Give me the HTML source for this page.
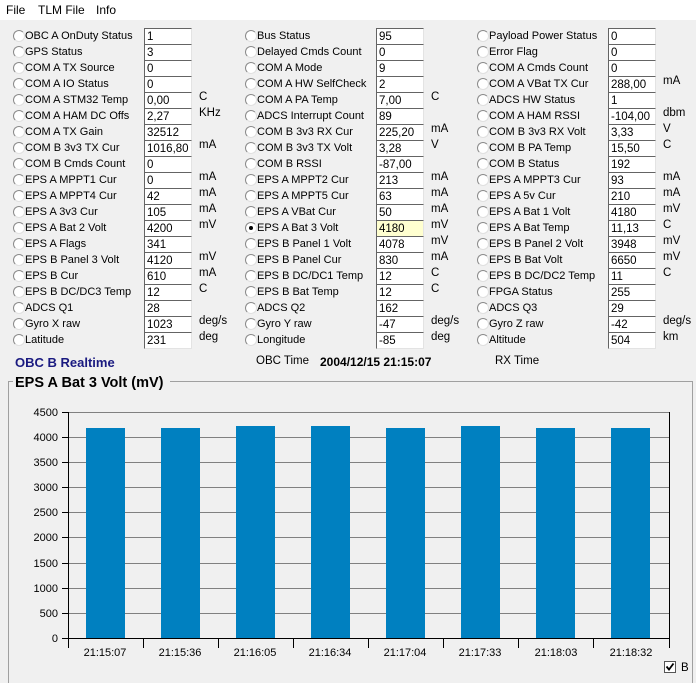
<!DOCTYPE html><html><head><style>
body{margin:0;width:696px;height:683px;background:#f0f0f0;font-family:"Liberation Sans",sans-serif;font-size:11px;color:#000;position:relative;overflow:hidden}
.m{position:absolute;top:0;left:0;width:696px;height:20px;background:#fff}
.m span{position:absolute;top:3px;font-size:12px}
.row{position:absolute;height:16px;width:232px}
.rd{position:absolute;left:7px;top:1px;width:10px;height:10px;border-radius:50%;background:#fff;border:1px solid #9a9a9a;border-color:#8a8a8a #e0e0e0 #e0e0e0 #8a8a8a}
.rd.on::after{content:"";position:absolute;left:3px;top:3px;width:4px;height:4px;border-radius:50%;background:#000}
.l{position:absolute;left:19px;top:1px;white-space:nowrap;font-size:11px}
.b{position:absolute;left:138px;top:-1px;width:44px;height:14px;background:#fff;border-left:1px solid #646464;border-top:1px solid #646464;border-right:1px solid #e3e3e3;border-bottom:1px solid #e3e3e3;padding:1px 0 0 2px;box-sizing:content-box;line-height:15px;font-size:11.5px}
.b.y{background:#ffffd0}
.u{position:absolute;left:193px;top:-2px;font-size:11.5px}
.t{position:absolute;white-space:nowrap}
</style></head><body>
<div class="m"><span style="left:6px">File</span><span style="left:38px">TLM File</span><span style="left:96px">Info</span></div>

<div style="position:absolute;left:6px;top:29px">
<div class="row" style="top:0"><i class="rd"></i><span class="l">OBC A OnDuty Status</span><span class="b">1</span></div>
<div class="row" style="top:16px"><i class="rd"></i><span class="l">GPS Status</span><span class="b">3</span></div>
<div class="row" style="top:32px"><i class="rd"></i><span class="l">COM A TX Source</span><span class="b">0</span></div>
<div class="row" style="top:48px"><i class="rd"></i><span class="l">COM A IO Status</span><span class="b">0</span></div>
<div class="row" style="top:64px"><i class="rd"></i><span class="l">COM A STM32 Temp</span><span class="b">0,00</span><span class="u">C</span></div>
<div class="row" style="top:80px"><i class="rd"></i><span class="l">COM A HAM DC Offs</span><span class="b">2,27</span><span class="u">KHz</span></div>
<div class="row" style="top:96px"><i class="rd"></i><span class="l">COM A TX Gain</span><span class="b">32512</span></div>
<div class="row" style="top:112px"><i class="rd"></i><span class="l">COM B 3v3 TX Cur</span><span class="b">1016,80</span><span class="u">mA</span></div>
<div class="row" style="top:128px"><i class="rd"></i><span class="l">COM B Cmds Count</span><span class="b">0</span></div>
<div class="row" style="top:144px"><i class="rd"></i><span class="l">EPS A MPPT1 Cur</span><span class="b">0</span><span class="u">mA</span></div>
<div class="row" style="top:160px"><i class="rd"></i><span class="l">EPS A MPPT4 Cur</span><span class="b">42</span><span class="u">mA</span></div>
<div class="row" style="top:176px"><i class="rd"></i><span class="l">EPS A 3v3 Cur</span><span class="b">105</span><span class="u">mA</span></div>
<div class="row" style="top:192px"><i class="rd"></i><span class="l">EPS A Bat 2 Volt</span><span class="b">4200</span><span class="u">mV</span></div>
<div class="row" style="top:208px"><i class="rd"></i><span class="l">EPS A Flags</span><span class="b">341</span></div>
<div class="row" style="top:224px"><i class="rd"></i><span class="l">EPS B Panel 3 Volt</span><span class="b">4120</span><span class="u">mV</span></div>
<div class="row" style="top:240px"><i class="rd"></i><span class="l">EPS B Cur</span><span class="b">610</span><span class="u">mA</span></div>
<div class="row" style="top:256px"><i class="rd"></i><span class="l">EPS B DC/DC3 Temp</span><span class="b">12</span><span class="u">C</span></div>
<div class="row" style="top:272px"><i class="rd"></i><span class="l">ADCS Q1</span><span class="b">28</span></div>
<div class="row" style="top:288px"><i class="rd"></i><span class="l">Gyro X raw</span><span class="b">1023</span><span class="u">deg/s</span></div>
<div class="row" style="top:304px"><i class="rd"></i><span class="l">Latitude</span><span class="b">231</span><span class="u">deg</span></div>
</div>

<div style="position:absolute;left:238px;top:29px">
<div class="row" style="top:0"><i class="rd"></i><span class="l">Bus Status</span><span class="b">95</span></div>
<div class="row" style="top:16px"><i class="rd"></i><span class="l">Delayed Cmds Count</span><span class="b">0</span></div>
<div class="row" style="top:32px"><i class="rd"></i><span class="l">COM A Mode</span><span class="b">9</span></div>
<div class="row" style="top:48px"><i class="rd"></i><span class="l">COM A HW SelfCheck</span><span class="b">2</span></div>
<div class="row" style="top:64px"><i class="rd"></i><span class="l">COM A PA Temp</span><span class="b">7,00</span><span class="u">C</span></div>
<div class="row" style="top:80px"><i class="rd"></i><span class="l">ADCS Interrupt Count</span><span class="b">89</span></div>
<div class="row" style="top:96px"><i class="rd"></i><span class="l">COM B 3v3 RX Cur</span><span class="b">225,20</span><span class="u">mA</span></div>
<div class="row" style="top:112px"><i class="rd"></i><span class="l">COM B 3v3 TX Volt</span><span class="b">3,28</span><span class="u">V</span></div>
<div class="row" style="top:128px"><i class="rd"></i><span class="l">COM B RSSI</span><span class="b">-87,00</span></div>
<div class="row" style="top:144px"><i class="rd"></i><span class="l">EPS A MPPT2 Cur</span><span class="b">213</span><span class="u">mA</span></div>
<div class="row" style="top:160px"><i class="rd"></i><span class="l">EPS A MPPT5 Cur</span><span class="b">63</span><span class="u">mA</span></div>
<div class="row" style="top:176px"><i class="rd"></i><span class="l">EPS A VBat Cur</span><span class="b">50</span><span class="u">mA</span></div>
<div class="row" style="top:192px"><i class="rd on"></i><span class="l">EPS A Bat 3 Volt</span><span class="b y">4180</span><span class="u">mV</span></div>
<div class="row" style="top:208px"><i class="rd"></i><span class="l">EPS B Panel 1 Volt</span><span class="b">4078</span><span class="u">mV</span></div>
<div class="row" style="top:224px"><i class="rd"></i><span class="l">EPS B Panel Cur</span><span class="b">830</span><span class="u">mA</span></div>
<div class="row" style="top:240px"><i class="rd"></i><span class="l">EPS B DC/DC1 Temp</span><span class="b">12</span><span class="u">C</span></div>
<div class="row" style="top:256px"><i class="rd"></i><span class="l">EPS B Bat Temp</span><span class="b">12</span><span class="u">C</span></div>
<div class="row" style="top:272px"><i class="rd"></i><span class="l">ADCS Q2</span><span class="b">162</span></div>
<div class="row" style="top:288px"><i class="rd"></i><span class="l">Gyro Y raw</span><span class="b">-47</span><span class="u">deg/s</span></div>
<div class="row" style="top:304px"><i class="rd"></i><span class="l">Longitude</span><span class="b">-85</span><span class="u">deg</span></div>
</div>

<div style="position:absolute;left:470px;top:29px">
<div class="row" style="top:0"><i class="rd"></i><span class="l">Payload Power Status</span><span class="b">0</span></div>
<div class="row" style="top:16px"><i class="rd"></i><span class="l">Error Flag</span><span class="b">0</span></div>
<div class="row" style="top:32px"><i class="rd"></i><span class="l">COM A Cmds Count</span><span class="b">0</span></div>
<div class="row" style="top:48px"><i class="rd"></i><span class="l">COM A VBat TX Cur</span><span class="b">288,00</span><span class="u">mA</span></div>
<div class="row" style="top:64px"><i class="rd"></i><span class="l">ADCS HW Status</span><span class="b">1</span></div>
<div class="row" style="top:80px"><i class="rd"></i><span class="l">COM A HAM RSSI</span><span class="b">-104,00</span><span class="u">dbm</span></div>
<div class="row" style="top:96px"><i class="rd"></i><span class="l">COM B 3v3 RX Volt</span><span class="b">3,33</span><span class="u">V</span></div>
<div class="row" style="top:112px"><i class="rd"></i><span class="l">COM B PA Temp</span><span class="b">15,50</span><span class="u">C</span></div>
<div class="row" style="top:128px"><i class="rd"></i><span class="l">COM B Status</span><span class="b">192</span></div>
<div class="row" style="top:144px"><i class="rd"></i><span class="l">EPS A MPPT3 Cur</span><span class="b">93</span><span class="u">mA</span></div>
<div class="row" style="top:160px"><i class="rd"></i><span class="l">EPS A 5v Cur</span><span class="b">210</span><span class="u">mA</span></div>
<div class="row" style="top:176px"><i class="rd"></i><span class="l">EPS A Bat 1 Volt</span><span class="b">4180</span><span class="u">mV</span></div>
<div class="row" style="top:192px"><i class="rd"></i><span class="l">EPS A Bat Temp</span><span class="b">11,13</span><span class="u">C</span></div>
<div class="row" style="top:208px"><i class="rd"></i><span class="l">EPS B Panel 2 Volt</span><span class="b">3948</span><span class="u">mV</span></div>
<div class="row" style="top:224px"><i class="rd"></i><span class="l">EPS B Bat Volt</span><span class="b">6650</span><span class="u">mV</span></div>
<div class="row" style="top:240px"><i class="rd"></i><span class="l">EPS B DC/DC2 Temp</span><span class="b">11</span><span class="u">C</span></div>
<div class="row" style="top:256px"><i class="rd"></i><span class="l">FPGA Status</span><span class="b">255</span></div>
<div class="row" style="top:272px"><i class="rd"></i><span class="l">ADCS Q3</span><span class="b">29</span></div>
<div class="row" style="top:288px"><i class="rd"></i><span class="l">Gyro Z raw</span><span class="b">-42</span><span class="u">deg/s</span></div>
<div class="row" style="top:304px"><i class="rd"></i><span class="l">Altitude</span><span class="b">504</span><span class="u">km</span></div>
</div>

<div class="t" style="left:15px;top:355px;font-weight:bold;font-size:13px;color:#1a1a80">OBC B Realtime</div>
<div class="t" style="left:256px;top:355px;font-size:11.5px">OBC Time</div>
<div class="t" style="left:320px;top:355px;font-weight:bold;font-size:12px">2004/12/15 21:15:07</div>
<div class="t" style="left:495px;top:355px;font-size:11.5px">RX Time</div>

<svg style="position:absolute;left:0;top:370px" width="696" height="313" xmlns="http://www.w3.org/2000/svg" font-family="Liberation Sans, sans-serif">
<path d="M8.5 320V11.5H13M170 11.5H692.5V320" fill="none" stroke="#a0a0a0"/>
<text x="15" y="17" font-size="14.5" font-weight="bold">EPS A Bat 3 Volt (mV)</text>
<g stroke="#808080">
<line x1="68" y1="42.5" x2="669" y2="42.5"/><line x1="68" y1="67.5" x2="669" y2="67.5"/><line x1="68" y1="92.5" x2="669" y2="92.5"/><line x1="68" y1="117.5" x2="669" y2="117.5"/><line x1="68" y1="142.5" x2="669" y2="142.5"/><line x1="68" y1="167.5" x2="669" y2="167.5"/><line x1="68" y1="193.5" x2="669" y2="193.5"/><line x1="68" y1="218.5" x2="669" y2="218.5"/><line x1="68" y1="243.5" x2="669" y2="243.5"/>
</g>
<g fill="#0080c0">
<rect x="86" y="58" width="39" height="210"/><rect x="161" y="58" width="39" height="210"/><rect x="236" y="56" width="39" height="212"/><rect x="311" y="56" width="39" height="212"/><rect x="386" y="58" width="39" height="210"/><rect x="461" y="56" width="39" height="212"/><rect x="536" y="58" width="39" height="210"/><rect x="611" y="58" width="39" height="210"/>
</g>
<g stroke="#000">
<line x1="68.5" y1="42" x2="68.5" y2="278"/><line x1="669.5" y1="42" x2="669.5" y2="278"/><line x1="62" y1="268.5" x2="670" y2="268.5"/>
<path d="M62 42.5h6M62 67.5h6M62 92.5h6M62 117.5h6M62 142.5h6M62 167.5h6M62 193.5h6M62 218.5h6M62 243.5h6M143.5 268v10M218.5 268v10M293.5 268v10M368.5 268v10M443.5 268v10M518.5 268v10M593.5 268v10"/>
</g>
<g font-size="11" text-anchor="end">
<text x="58" y="46">4500</text><text x="58" y="71">4000</text><text x="58" y="96">3500</text><text x="58" y="121">3000</text><text x="58" y="146">2500</text><text x="58" y="171">2000</text><text x="58" y="197">1500</text><text x="58" y="222">1000</text><text x="58" y="247">500</text><text x="58" y="272">0</text>
</g>
<g font-size="11" text-anchor="middle">
<text x="105" y="286">21:15:07</text><text x="180" y="286">21:15:36</text><text x="255" y="286">21:16:05</text><text x="330" y="286">21:16:34</text><text x="405" y="286">21:17:04</text><text x="480" y="286">21:17:33</text><text x="556" y="286">21:18:03</text><text x="631" y="286">21:18:32</text>
</g>
<rect x="664.5" y="291.5" width="11" height="11" fill="#fff" stroke="#555"/>
<path d="M666.5 296.5l2.5 3 4.5-6" fill="none" stroke="#000" stroke-width="1.8"/>
<text x="681" y="301" font-size="11.5">B</text>
</svg>
</body></html>
